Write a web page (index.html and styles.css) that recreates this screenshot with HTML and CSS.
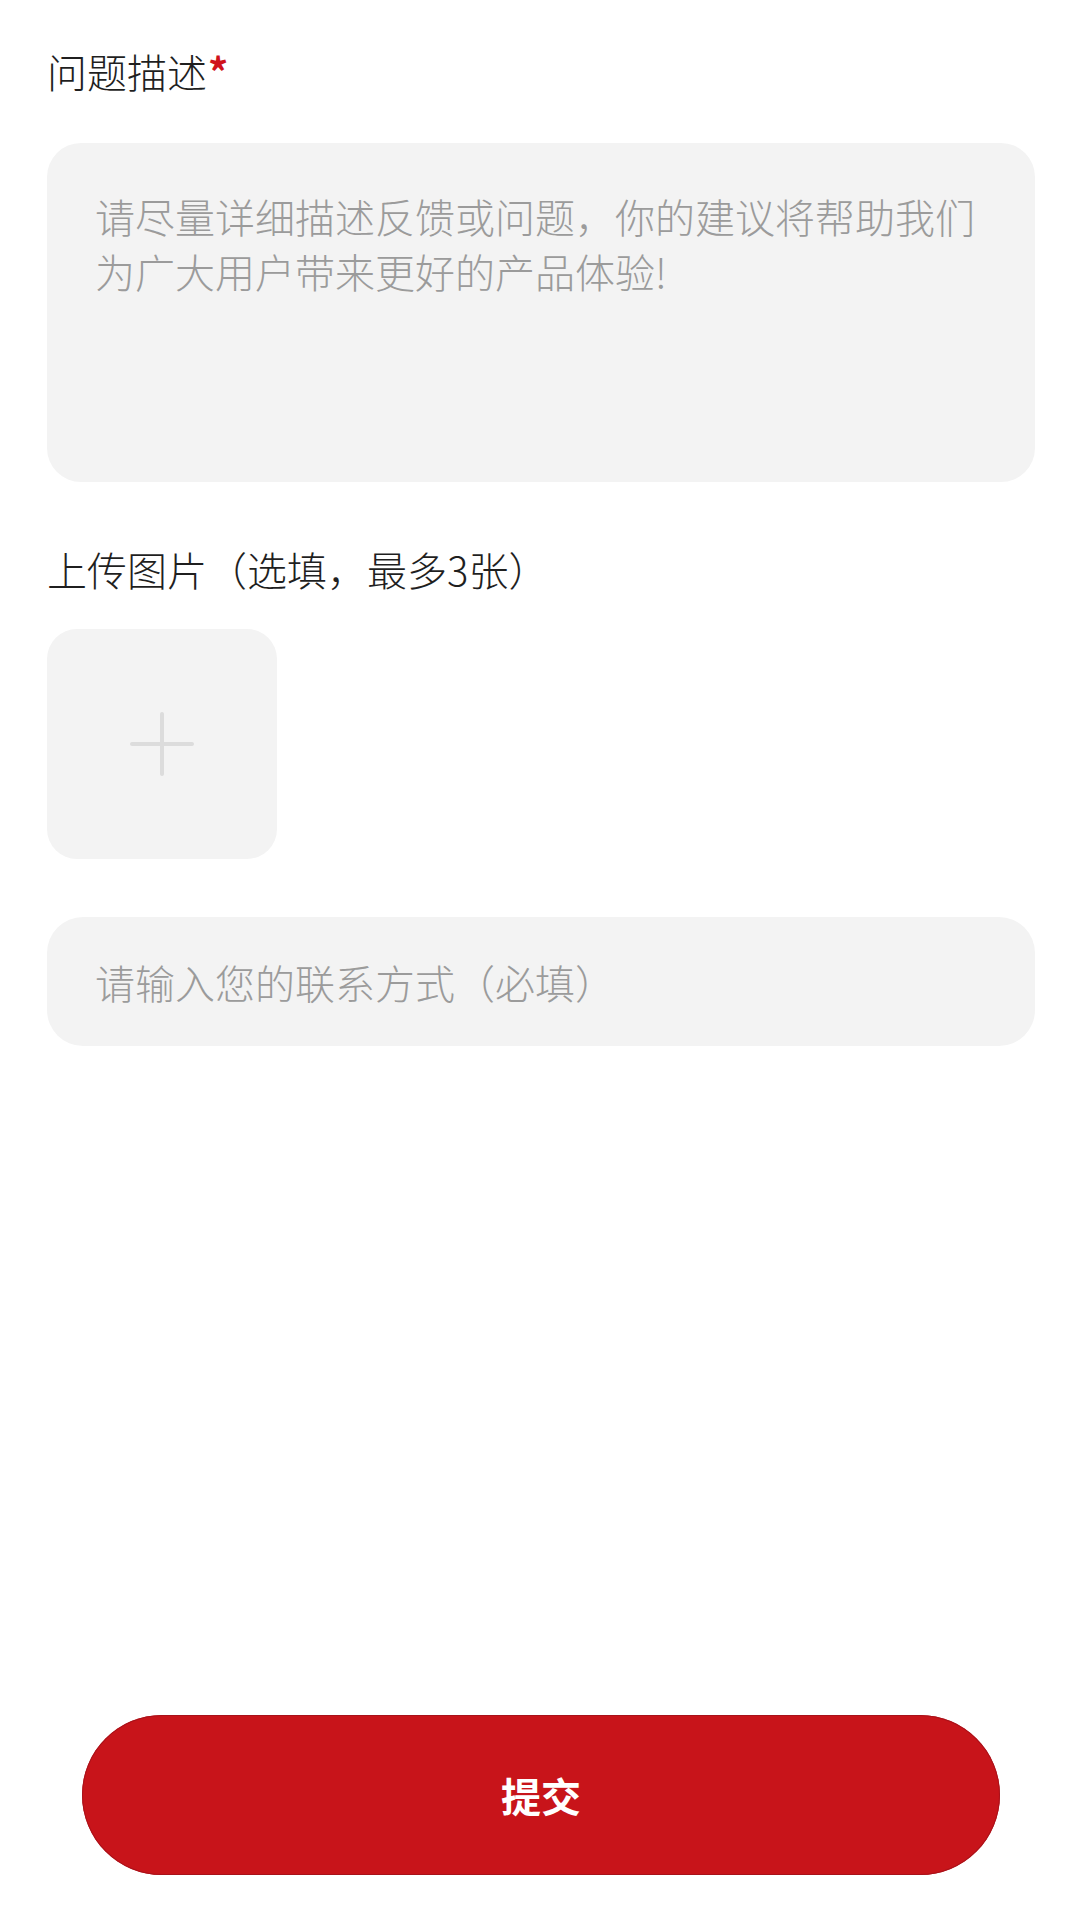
FILE: index.html
```html
<!DOCTYPE html>
<html lang="zh-CN">
<head>
<meta charset="utf-8">
<title>问题反馈</title>
<link rel="stylesheet" href="styles.css">
</head>
<body>
<div class="page">
  <div class="form">
    <div class="label label-first">问题描述<span class="req">*</span></div>
    <div class="textarea">请尽量详细描述反馈或问题，你的建议将帮助我们为广大用户带来更好的产品体验!</div>
    <div class="label label-upload">上传图片（选填，最多3张）</div>
    <div class="upload">
      <svg class="plus" width="64" height="64" viewBox="0 0 64 64" aria-hidden="true">
        <path d="M32 2 V62 M2 32 H62" stroke="#dcdcdc" stroke-width="4" stroke-linecap="round" fill="none"/>
      </svg>
    </div>
    <div class="input">请输入您的联系方式（必填）</div>
  </div>
  <div class="footer">
    <div class="submit">提交</div>
  </div>
</div>
</body>
</html>
```
FILE: styles.css
```css
html, body {
  margin: 0;
  padding: 0;
  background: #ffffff;
}
body {
  font-family: "Noto Sans CJK SC", "Noto Sans", sans-serif;
  font-weight: 300;
  color: #1f1f1f;
}
.page {
  height: 1920px;
  display: flex;
  flex-direction: column;
  box-sizing: border-box;
  padding: 0 45px 0 47px;
}
.form {
  display: flex;
  flex-direction: column;
}
.label {
  font-size: 40px;
  line-height: 56px;
  color: #1f1f1f;
}
.label-first {
  margin-top: 43px;
}
.req {
  color: #d0121b;
  font-size: 40px;
  font-weight: 700;
  margin-left: 1px;
}
.textarea {
  margin-top: 44px;
  height: 339px;
  box-sizing: border-box;
  background: #f3f3f3;
  border-radius: 34px;
  padding: 46px 50px 0 48px;
  font-size: 40px;
  line-height: 55px;
  color: #9b9b9b;
}
.label-upload {
  margin-top: 59px;
}
.upload {
  margin-top: 32px;
  width: 230px;
  height: 230px;
  background: #f3f3f3;
  border-radius: 30px;
  display: flex;
  align-items: center;
  justify-content: center;
}
.input {
  margin-top: 58px;
  height: 129px;
  box-sizing: border-box;
  background: #f3f3f3;
  border-radius: 36px;
  padding-left: 48px;
  display: flex;
  align-items: center;
  font-size: 40px;
  color: #9b9b9b;
}
.footer {
  margin-top: auto;
  padding: 0 35px 45px 35px;
}
.submit {
  height: 160px;
  border-radius: 80px;
  background: #c8141a;
  box-shadow: inset 0 0 0 1px #a8121a;
  display: flex;
  align-items: center;
  justify-content: center;
  color: #ffffff;
  font-size: 40px;
  font-weight: 700;
}
```
